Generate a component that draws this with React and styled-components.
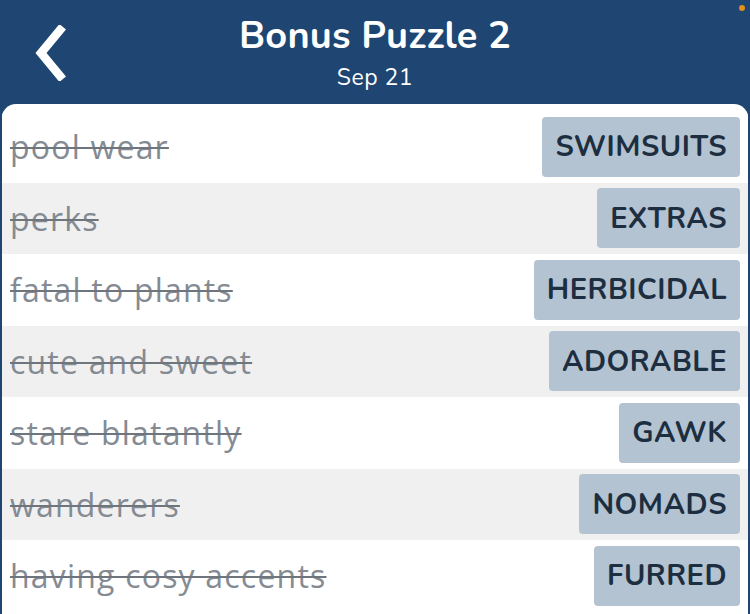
import React from 'react';
import styled, { createGlobalStyle } from 'styled-components';

const Global = createGlobalStyle`
  html, body {
    margin: 0;
    padding: 0;
    background: #1f4572;
  }
  * { box-sizing: border-box; }
`;

const clues = [
  ['pool wear', 'SWIMSUITS'],
  ['perks', 'EXTRAS'],
  ['fatal to plants', 'HERBICIDAL'],
  ['cute and sweet', 'ADORABLE'],
  ['stare blatantly', 'GAWK'],
  ['wanderers', 'NOMADS'],
  ['having cosy accents', 'FURRED'],
];

export default function App() {
  return (
    <>
      <Global />
      <Screen>
        <Header>
          <BackButton aria-label="Back">
            <svg width="40" height="56" viewBox="0 0 40 56">
              <polyline
                points="28,5 9,28 28,51"
                fill="none"
                stroke="#fff"
                strokeWidth="8.5"
                strokeLinecap="square"
                strokeLinejoin="miter"
              />
            </svg>
          </BackButton>
          <Title>Bonus Puzzle 2</Title>
          <Subtitle>Sep 21</Subtitle>
          <StatusDot />
        </Header>
        <Panel>
          {clues.map(([clue, answer], i) => (
            <Row key={answer} $shade={i % 2 === 1}>
              <Clue>{clue}</Clue>
              <Answer>{answer}</Answer>
            </Row>
          ))}
        </Panel>
      </Screen>
    </>
  );
}

const Screen = styled.div`
  width: 750px;
  height: 614px;
  overflow: hidden;
  background: #1f4572;
  display: flex;
  flex-direction: column;
`;

const Header = styled.header`
  position: relative;
  height: 104px;
  flex-shrink: 0;
  display: flex;
  flex-direction: column;
  align-items: center;
  padding-top: 13px;
  color: #fff;
  font-family: 'Nunito', 'Lato', sans-serif;
`;

const BackButton = styled.div`
  position: absolute;
  left: 32px;
  top: 25px;
  display: flex;
`;

const StatusDot = styled.span`
  position: absolute;
  right: 5px;
  top: 5px;
  width: 6px;
  height: 6px;
  border-radius: 50%;
  background: #e0921c;
`;

const Title = styled.h1`
  margin: 0;
  font-size: 38px;
  font-weight: 700;
  line-height: 46px;
  letter-spacing: 0.2px;
`;

const Subtitle = styled.div`
  font-size: 23px;
  line-height: 28px;
  margin-top: 5px;
  letter-spacing: 0.5px;
`;

const Panel = styled.main`
  flex: 1;
  margin: 0 2px;
  padding-top: 7px;
  background: #fff;
  border-radius: 14px 14px 0 0;
  overflow: hidden;
`;

const Row = styled.div`
  height: 71.5px;
  display: flex;
  align-items: center;
  justify-content: space-between;
  padding: 0 8px 0 8px;
  margin: 0 -2px;
  background: ${p => (p.$shade ? '#f0f0f0' : '#fff')};
`;

const Clue = styled.span`
  padding-left: 2px;
  font-family: 'Open Sans', sans-serif;
  font-size: 32px;
  letter-spacing: 1.2px;
  color: #858b93;
  text-decoration: line-through;
  text-decoration-thickness: 2px;
  text-decoration-color: #6f757d;
`;

const Answer = styled.span`
  height: 60px;
  display: flex;
  align-items: center;
  padding: 0 13px;
  margin-right: 2px;
  border-radius: 4px;
  background: #b3c3d1;
  color: #1c2e40;
  font-family: 'Nunito', 'Lato', sans-serif;
  font-weight: 700;
  font-size: 29px;
  letter-spacing: 0.5px;
`;
